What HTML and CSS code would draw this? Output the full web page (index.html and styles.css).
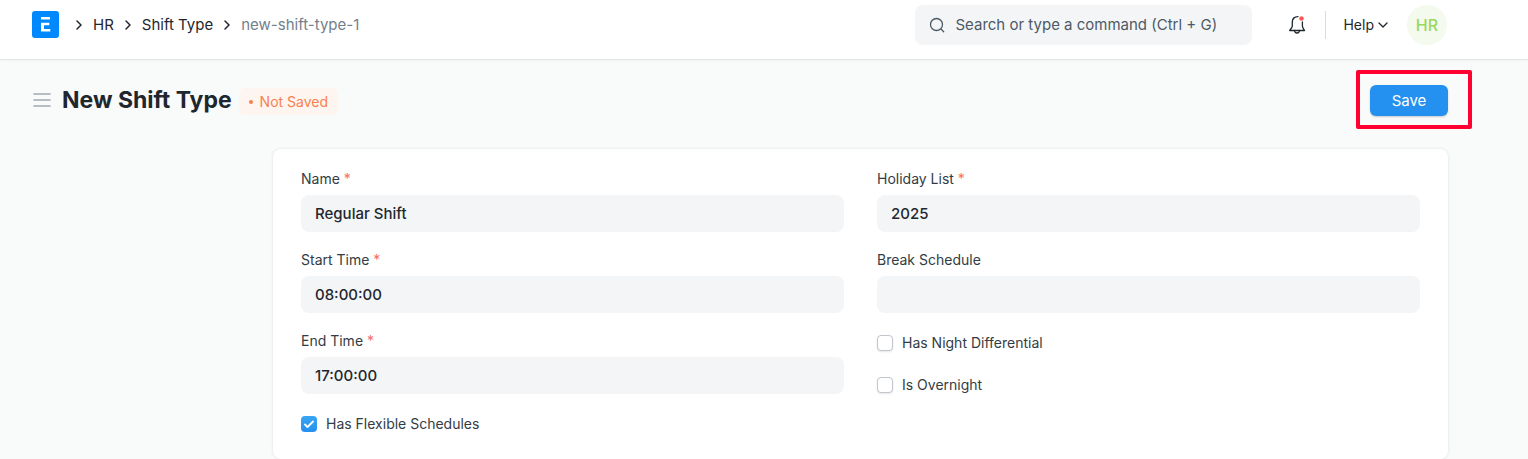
FILE: index.html
```
<!DOCTYPE html>
<html lang="en">
<head>
    <meta charset="UTF-8">
    <meta name="viewport" content="width=device-width, initial-scale=1.0">
    <title>New Shift Type</title>
    <link rel="stylesheet" href="styles.css">
</head>
<body>
    <header class="navbar">
        <nav class="breadcrumbs" aria-label="Breadcrumb">
            <a href="#" class="logo" aria-label="Home">
                <svg width="27" height="27" viewBox="0 0 27 27">
                    <rect width="27" height="27" rx="3" fill="#0089ff"/>
                    <path d="M9 6h9v2.500H9zM9 11.700h8.300v2.500h-5.300v3.800h6.300v2.500H9z" fill="#fff"/>
                </svg>
            </a>
            <svg class="chevron" width="8" height="12" viewBox="0 0 8 12"><path d="M2 2l4 4-4 4"/></svg>
            <a href="#">HR</a>
            <svg class="chevron" width="8" height="12" viewBox="0 0 8 12"><path d="M2 2l4 4-4 4"/></svg>
            <a href="#">Shift Type</a>
            <svg class="chevron" width="8" height="12" viewBox="0 0 8 12"><path d="M2 2l4 4-4 4"/></svg>
            <a href="#" class="current">new-shift-type-1</a>
        </nav>
        <div class="navbar-tools">
            <div class="search">
                <svg width="16" height="16" viewBox="0 0 16 16">
                    <circle cx="7.500" cy="7.500" r="6"/>
                    <path d="M12 12l2.700 2.700"/>
                </svg>
                <input type="text" aria-label="Search" placeholder="Search or type a command (Ctrl + G)">
            </div>
            <button class="bell" aria-label="Notifications">
                <svg width="18" height="20" viewBox="0 0 18 20">
                    <path d="M10 1.600C6.300 1.600 4.300 4 4.300 7v4c0 2-1.900 2.800-2.600 4.500h14.800c-.6-1.700-2.100-2.500-2.100-4.500V7"/>
                    <path d="M6.500 15.500c.2 3.300 4.800 3.300 5 0"/>
                    <circle class="dot" cx="13.500" cy="3.500" r="2.300"/>
                </svg>
            </button>
            <button class="help">
                Help
                <svg width="10" height="8" viewBox="0 0 10 8"><path d="M1 2l4 4 4-4"/></svg>
            </button>
            <button class="avatar">HR</button>
        </div>
    </header>

    <main class="page">
        <div class="page-head">
            <button class="menu-toggle" aria-label="Toggle sidebar">
                <svg width="20" height="16" viewBox="0 0 20 16"><path d="M2 2h16M2 8h16M2 14h16"/></svg>
            </button>
            <h1>New Shift Type</h1>
            <span class="indicator">Not Saved</span>
            <div class="page-actions">
                <button class="save">Save</button>
            </div>
        </div>

        <form class="form-card">
            <div class="column">
                <div class="field">
                    <label for="name">Name <span class="required">*</span></label>
                    <input type="text" id="name" value="Regular Shift">
                </div>
                <div class="field">
                    <label for="start">Start Time <span class="required">*</span></label>
                    <input type="text" id="start" value="08:00:00">
                </div>
                <div class="field">
                    <label for="end">End Time <span class="required">*</span></label>
                    <input type="text" id="end" value="17:00:00">
                </div>
                <label class="check"><input type="checkbox" checked>Has Flexible Schedules</label>
            </div>
            <div class="column">
                <div class="field">
                    <label for="holiday">Holiday List <span class="required">*</span></label>
                    <input type="text" id="holiday" value="2025">
                </div>
                <div class="field">
                    <label for="break">Break Schedule</label>
                    <input type="text" id="break">
                </div>
                <label class="check"><input type="checkbox">Has Night Differential</label>
                <label class="check"><input type="checkbox">Is Overnight</label>
            </div>
        </form>
    </main>
</body>
</html>
```
FILE: styles.css
```
:root {
    --primary: #2490ef;
    --text: #1f272e;
    --text-label: #333c44;
    --text-muted: #74808b;
    --control-bg: #f4f5f6;
    --page-bg: #f9fafa;
    --highlight: #ff0030;
}

* {
    box-sizing: border-box;
}

body {
    margin: 0;
    font-family: Inter, sans-serif;
    font-size: 15px;
    color: var(--text);
    background: var(--page-bg);
}

button,
input {
    font: inherit;
    color: inherit;
    border: none;
    padding: 0;
}

button {
    background: none;
    cursor: pointer;
}

a {
    color: inherit;
    text-decoration: none;
}

svg {
    display: block;
    flex: none;
    fill: none;
    stroke: var(--text);
    stroke-linecap: round;
    stroke-linejoin: round;
}

.navbar {
    display: flex;
    justify-content: space-between;
    align-items: center;
    height: 60px;
    padding: 0 81px 10px 32px;
    background: #fff;
    border-bottom: 1px solid #e6e8e8;
    box-shadow: 0 1px 3px rgba(0, 0, 0, 0.04);
}

.breadcrumbs {
    display: flex;
    align-items: center;
    gap: 10px;
}

.logo {
    margin-right: 6px;
}

.logo svg {
    stroke: none;
}

.chevron {
    stroke-width: 1.5;
}

.current {
    color: var(--text-muted);
}

.navbar-tools {
    display: flex;
    align-items: center;
}

.search {
    display: flex;
    align-items: center;
    gap: 10px;
    width: 337px;
    height: 40px;
    padding: 0 14px;
    background: var(--control-bg);
    border-radius: 8px;
}

.search svg {
    stroke: #4c5a67;
    stroke-width: 1.3;
}

.search input {
    flex: 1;
    min-width: 0;
    background: none;
}

.search input::placeholder {
    color: #4c5a67;
    opacity: 1;
}

.bell {
    padding: 4px 19px 4px 36px;
    border-right: 1px solid #d8dcdf;
}

.bell svg {
    stroke-width: 1.3;
}

.bell .dot {
    fill: #ff5858;
    stroke: none;
}

.help {
    display: flex;
    align-items: center;
    gap: 4px;
    margin: 0 19px 0 17px;
    font-size: 14px;
}

.help svg {
    stroke-width: 1.3;
}

.avatar {
    width: 40px;
    height: 40px;
    border-radius: 50%;
    background: #f4faee;
    color: #98d85b;
    font-size: 16px;
    font-weight: 500;
}

.page {
    padding: 0 80px 0 32px;
}

.page-head {
    display: flex;
    align-items: center;
    height: 80px;
}

.menu-toggle {
    margin-right: 10px;
}

.menu-toggle svg {
    stroke: #a0a9b3;
    stroke-width: 1.6;
}

h1 {
    margin: 0;
    font-size: 23px;
    line-height: 32px;
    font-weight: 700;
}

.indicator {
    display: flex;
    align-items: center;
    gap: 7px;
    margin: 3px 0 0 7px;
    padding: 4px 10px;
    border-radius: 6px;
    background: #fff5f0;
    color: #f8814f;
    font-size: 14px;
    line-height: 19px;
}

.indicator::before {
    content: "";
    width: 4px;
    height: 4px;
    border-radius: 50%;
    background: currentColor;
}

.page-actions {
    position: relative;
    margin-left: auto;
}

/* callout frame around the save button */
.page-actions::after {
    content: "";
    position: absolute;
    inset: -15px -24px -13px -14px;
    border: 4px solid var(--highlight);
    border-radius: 2px;
    pointer-events: none;
}

.save {
    display: block;
    width: 78px;
    height: 31px;
    border-radius: 6px;
    background: var(--primary);
    box-shadow: 0 1px 2px rgba(0, 0, 0, 0.2);
    color: #fff;
}

.form-card {
    display: grid;
    grid-template-columns: 1fr 1fr;
    gap: 33px;
    margin: 9px 0 0 241px;
    padding: 20px 28px 23px;
    background: #fff;
    border-radius: 8px;
    box-shadow: 0 0 3px rgba(0, 0, 0, 0.12);
}

.column {
    display: flex;
    flex-direction: column;
    gap: 18px;
}

.field label {
    display: block;
    margin-bottom: 6px;
    color: var(--text-label);
    font-size: 14px;
    line-height: 20px;
}

.required {
    color: #f56b6b;
}

.field input {
    display: block;
    width: 100%;
    height: 37px;
    padding: 0 14px;
    background: var(--control-bg);
    border-radius: 8px;
    font-weight: 500;
}

.check {
    display: flex;
    align-items: center;
    gap: 9px;
    color: var(--text-label);
    font-size: 14px;
    line-height: 24px;
}

.check input {
    appearance: none;
    width: 16px;
    height: 16px;
    margin: 0;
    border: 1px solid #c0c6cc;
    border-radius: 4px;
    background: #fff;
    box-shadow: 0 1px 2px rgba(0, 0, 0, 0.1);
}

.check input:checked {
    border: none;
    background: url("data:image/svg+xml,%3Csvg xmlns='http://www.w3.org/2000/svg' viewBox='0 0 16 16'%3E%3Cpath d='M4 8.500l2.500 2.500L12 5.500' fill='none' stroke='white' stroke-width='1.800' stroke-linecap='round' stroke-linejoin='round'/%3E%3C/svg%3E"), linear-gradient(#38a6f5, #2490ef);
    box-shadow: none;
}
```
